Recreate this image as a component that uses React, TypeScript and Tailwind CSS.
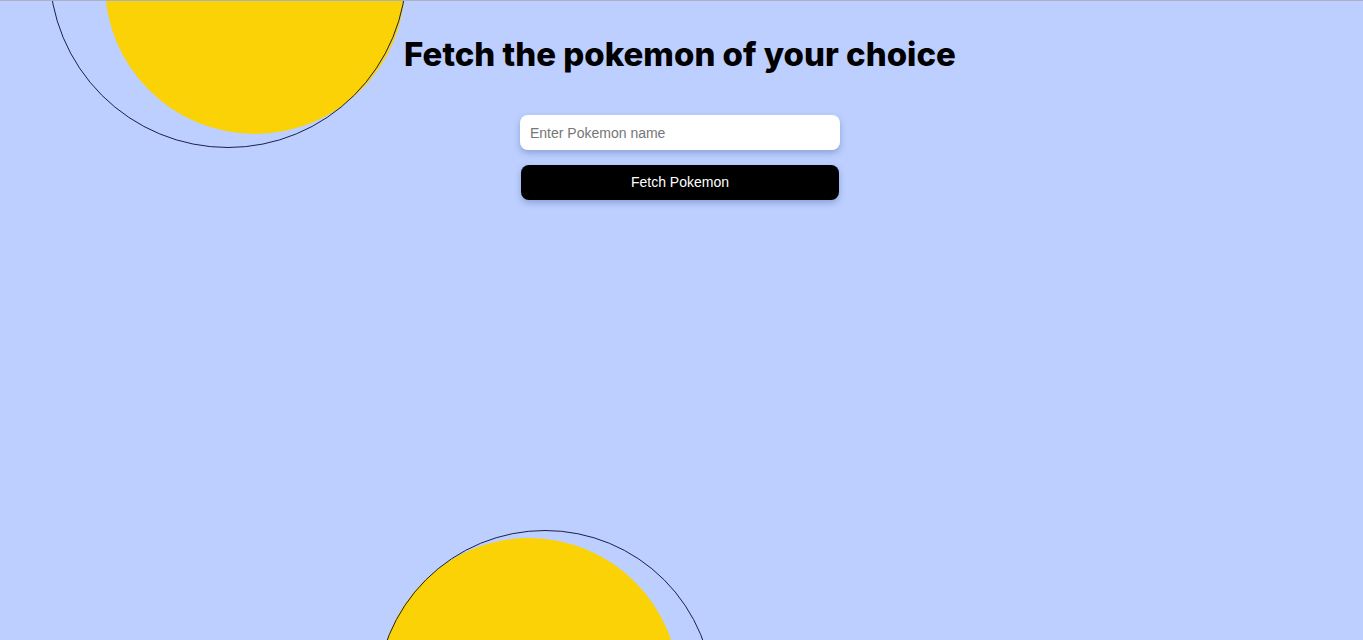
export default function App() {
  return (
    <div className="relative h-[640px] w-full overflow-hidden border-t border-[#a9b1c2] bg-[#bccfff] font-['Liberation_Sans',Arial,sans-serif]">
      {/* decorative circles */}
      <div className="absolute left-[105px] top-[-167px] h-[300px] w-[300px] rounded-full bg-[#fbd205]" />
      <div className="absolute left-[49px] top-[-211px] h-[358px] w-[358px] rounded-full border border-[#1b1f4a]" />
      <div className="absolute left-[379px] top-[537px] h-[300px] w-[300px] rounded-full bg-[#fbd205]" />
      <div className="absolute left-[376px] top-[529px] h-[338px] w-[338px] rounded-full border border-[#1b1f4a]" />

      <div className="relative flex flex-col items-center pr-[3px] pt-[31px]">
        <h1 className="font-['Inter',sans-serif] text-[33px] font-extrabold leading-[44px] tracking-[0px] text-black">
          Fetch the pokemon of your choice
        </h1>
        <div className="mt-[39px] flex w-[320px] flex-col items-center gap-[15px]">
          <input
            type="text"
            placeholder="Enter Pokemon name"
            className="h-[35px] w-[320px] rounded-[8px] bg-white px-[10px] text-[14px] text-black shadow-[0_3px_6px_rgba(60,80,140,0.35)] outline-none placeholder:text-[#767676]"
          />
          <button className="h-[35px] w-[318px] rounded-[8px] bg-black text-[14px] font-medium text-white shadow-[0_3px_6px_rgba(60,80,140,0.35)]">
            Fetch Pokemon
          </button>
        </div>
      </div>
    </div>
  );
}
